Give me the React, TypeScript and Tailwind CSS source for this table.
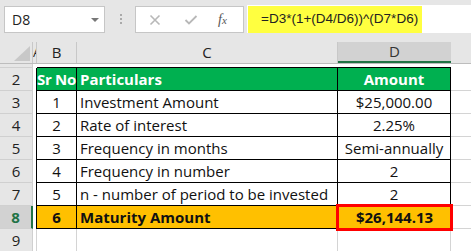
import React from 'react';

const rows = [
  { n: '3', sr: '1', label: 'Investment Amount', value: '$25,000.00' },
  { n: '4', sr: '2', label: 'Rate of interest', value: '2.25%' },
  { n: '5', sr: '3', label: 'Frequency in months', value: 'Semi-annually' },
  { n: '6', sr: '4', label: 'Frequency in number', value: '2' },
  { n: '7', sr: '5', label: 'n - number of period to be invested', value: '2' },
];

const RowHead = ({ n, active = false }: { n: string; active?: boolean }) => (
  <div
    className={`w-[33px] shrink-0 flex items-center justify-center border-b border-r border-[#d0d0d0] text-[15px] ${
      active ? 'bg-[#d2d2d2] text-[#217346] border-r-2 border-r-[#217346]' : 'bg-[#e6e6e6] text-[#222]'
    }`}
  >
    {n}
  </div>
);

export default function App() {
  return (
    <div className="w-[471px] h-[251px] overflow-hidden bg-[#e6e6e6] text-black" style={{ fontFamily: '"Open Sans", sans-serif' }}>
      {/* Formula bar */}
      <div className="h-[42px] flex items-start pt-[5px]">
        <div className="ml-[4px] mt-px w-[101px] h-[27px] bg-white border border-[#c6c6c6] flex items-center justify-between pl-[7px] pr-[5px]">
          <span className="text-[14px] text-[#222]">D8</span>
          <span className="w-0 h-0 border-l-[4px] border-r-[4px] border-t-[4px] border-l-transparent border-r-transparent border-t-[#777]" />
        </div>
        <div className="ml-[15px] mt-[9px] flex flex-col gap-[2px]">
          <span className="w-[2px] h-[2px] bg-[#aaa]" />
          <span className="w-[2px] h-[2px] bg-[#aaa]" />
          <span className="w-[2px] h-[2px] bg-[#aaa]" />
        </div>
        <div className="ml-[13px] mt-px w-[109px] h-[27px] bg-white border border-[#c6c6c6] flex items-center">
          <svg width="12" height="12" viewBox="0 0 12 12" className="ml-[13px]">
            <path d="M1.5 1.5 L10.5 10.5 M10.5 1.5 L1.5 10.5" stroke="#b8b8b8" strokeWidth="1.6" />
          </svg>
          <svg width="14" height="12" viewBox="0 0 14 12" className="ml-[23px]">
            <path d="M1.5 6 L5 9.5 L12.5 2" stroke="#b8b8b8" strokeWidth="1.8" fill="none" />
          </svg>
          <span className="ml-[20px] text-[14px] italic text-[#555]" style={{ fontFamily: '"Liberation Serif", serif' }}>
            f<span className="text-[11px]">x</span>
          </span>
        </div>
        <div className="ml-[3px] flex-1 h-[28px] bg-white flex items-center">
          <div
            className="ml-px h-[27px] w-[174px] bg-[#ffff40] flex items-center pl-[13px] text-[13.5px] text-[#222] whitespace-nowrap"
            style={{ fontFamily: '"Liberation Sans", sans-serif' }}
          >
            =D3*(1+(D4/D6))^(D7*D6)
          </div>
        </div>
      </div>

      {/* Column headers */}
      <div className="h-[22px] flex border-b border-[#bdbdbd] text-[15px] text-[#222]">
        <div className="w-[33px] shrink-0 relative border-r border-[#c8c8c8]">
          <svg width="16" height="15" className="absolute right-[2px] bottom-[2px]">
            <path d="M16 0 L16 15 L0 15 Z" fill="#c8c8c8" />
          </svg>
        </div>
        <div className="w-[4px] shrink-0 border-r border-[#c8c8c8] overflow-hidden flex items-center text-[13px]">A</div>
        <div className="w-[40px] shrink-0 border-r border-[#c8c8c8] flex items-center justify-center">B</div>
        <div className="w-[261px] shrink-0 border-r border-[#c8c8c8] flex items-center justify-center">C</div>
        <div className="w-[113px] shrink-0 bg-[#d2d2d2] border-b-2 border-[#217346] flex items-center justify-center text-[#333]">D</div>
        <div className="flex-1" />
      </div>

      {/* Row 1 */}
      <div className="h-[4px] flex bg-white">
        <div className="w-[33px] shrink-0 bg-[#e6e6e6] border-r border-b border-[#d0d0d0]" />
        <div className="flex-1 border-b border-black ml-[4px] mr-[20px]" />
      </div>

      {/* Row 2 - header */}
      <div className="h-[23px] flex bg-white">
        <RowHead n="2" />
        <div className="w-[4px] shrink-0 border-r border-black" />
        <div className="w-[40px] shrink-0 bg-[#00b050] border-r border-b border-black flex items-center justify-center text-white font-bold text-[15px] whitespace-nowrap tracking-[-0.3px]">
          Sr No
        </div>
        <div className="w-[261px] shrink-0 bg-[#00b050] border-r border-b border-black flex items-center pl-[3px] text-white font-bold text-[15px]">
          Particulars
        </div>
        <div className="w-[113px] shrink-0 bg-[#00b050] border-r border-b border-black flex items-center justify-center text-white font-bold text-[15px]">
          Amount
        </div>
        <div className="flex-1 border-b border-[#d4d4d4]" />
      </div>

      {rows.map((r) => (
        <div key={r.n} className="h-[23px] flex bg-white text-[15px] text-[#111]">
          <RowHead n={r.n} />
          <div className="w-[4px] shrink-0 border-r border-black" />
          <div className="w-[40px] shrink-0 border-r border-b border-black flex items-center justify-center">{r.sr}</div>
          <div className="w-[261px] shrink-0 border-r border-b border-black flex items-center pl-[3px] whitespace-nowrap">{r.label}</div>
          <div className="w-[113px] shrink-0 border-r border-b border-black flex items-center justify-center">{r.value}</div>
          <div className="flex-1 border-b border-[#d4d4d4]" />
        </div>
      ))}

      {/* Row 8 */}
      <div className="h-[23px] flex bg-white text-[15px] font-bold text-[#111]">
        <RowHead n="8" active />
        <div className="w-[4px] shrink-0 border-r border-black" />
        <div className="w-[40px] shrink-0 bg-[#ffc000] border-r border-b border-black flex items-center justify-center">6</div>
        <div className="w-[261px] shrink-0 bg-[#ffc000] border-r border-b border-black flex items-center pl-[3px]">Maturity Amount</div>
        <div className="w-[113px] shrink-0 bg-[#ffc000] border-b border-black relative flex items-center justify-center">
          <div className="absolute -left-[2px] -right-[2px] -top-[2px] -bottom-[3px] border-[3px] border-[#ff0000]" />
          $26,144.13
        </div>
        <div className="flex-1 border-b border-[#d4d4d4] border-l border-l-black" />
      </div>

      {/* Row 9 */}
      <div className="h-[23px] flex bg-white">
        <RowHead n="9" />
        <div className="flex-1 flex">
          <div className="w-[4px] shrink-0 border-r border-[#d4d4d4]" />
          <div className="w-[40px] shrink-0 border-r border-[#d4d4d4]" />
          <div className="w-[261px] shrink-0 border-r border-[#d4d4d4]" />
          <div className="w-[113px] shrink-0 border-r border-[#d4d4d4]" />
        </div>
      </div>
    </div>
  );
}
